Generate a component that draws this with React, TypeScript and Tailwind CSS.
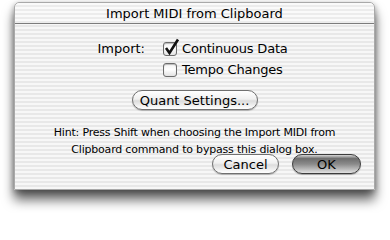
import React from "react";

const stripes =
  "bg-[repeating-linear-gradient(to_bottom,#f7f7f7_0px,#f7f7f7_2px,#e8e8e8_2px,#e8e8e8_4px)]";

const pill =
  "h-[20px] rounded-full border border-[#707070] bg-[linear-gradient(to_bottom,#ffffff,#f0f0f0_45%,#dcdcdc_55%,#f4f4f4_85%,#ffffff)] shadow-[0_1px_1px_rgba(0,0,0,0.25)] flex items-center justify-center leading-none";

function CheckBox({ checked }: { checked?: boolean }) {
  return (
    <div className="relative w-[14px] h-[14px] shrink-0">
      <div className="absolute inset-0 rounded-[3px] border border-[#6c6c6c] bg-[linear-gradient(to_bottom,#f4f4f4,#ffffff_45%,#e2e2e2)] shadow-[inset_0_1px_1px_rgba(0,0,0,0.25)]" />
      {checked && (
        <svg className="absolute left-0 -top-[4px] overflow-visible" width="17" height="18" viewBox="0 0 17 18">
          <path d="M3 10 L6.5 15 L15 1.5" fill="none" stroke="#111" strokeWidth="2.6" strokeLinecap="butt" strokeLinejoin="miter" />
        </svg>
      )}
    </div>
  );
}

function CheckRow({ label, checked }: { label: string; checked?: boolean }) {
  return (
    <div className="flex items-center h-[21px] gap-[5px]">
      <CheckBox checked={checked} />
      <span className="tracking-[-0.2px]">{label}</span>
    </div>
  );
}

export default function App() {
  return (
    <div
      className="w-[390px] h-[213px] bg-white overflow-hidden pt-[2px] pl-[14px] text-[13px] text-black"
      style={{ fontFamily: '"DejaVu Sans", "Liberation Sans", sans-serif' }}
    >
      <div className={`w-[361px] h-[188px] flex flex-col rounded-t-[5px] border border-[#a9a9a9] shadow-[0_10px_12px_rgba(0,0,0,0.6),0_2px_6px_rgba(0,0,0,0.35)] ${stripes}`}>
        {/* title bar */}
        <div className="h-[21px] shrink-0 flex items-center justify-center border-b border-[#7c7c7c] rounded-t-[5px] bg-[repeating-linear-gradient(to_bottom,#fafafa_0px,#fafafa_2px,#ececec_2px,#ececec_4px)]">
          <span className="leading-none">Import MIDI from Clipboard</span>
        </div>

        {/* import options */}
        <div className="flex mt-[14px]">
          <div className="w-[130px] text-right h-[21px] flex items-center justify-end">Import:</div>
          <div className="flex flex-col ml-[18px]">
            <CheckRow label="Continuous Data" checked />
            <CheckRow label="Tempo Changes" />
          </div>
        </div>

        <div className="flex justify-center mt-[10px]">
          <button className={`w-[126px] ${pill}`}>Quant Settings...</button>
        </div>

        <p className="mt-[14px] text-center text-[11px] leading-[17px] tracking-[-0.2px]">
          Hint: Press Shift when choosing the Import MIDI from
          <br />
          Clipboard command to bypass this dialog box.
        </p>

        <div className="flex justify-end gap-[13px] pr-[13px] mt-[-4px]">
          <button className={`w-[67px] ${pill}`}>Cancel</button>
          <button className="w-[69px] h-[20px] rounded-full border border-[#3c3c3c] bg-[linear-gradient(to_bottom,#d8d8d8,#6e6e6e_20%,#8a8a8a_50%,#bdbdbd_80%,#e2e2e2)] shadow-[0_1px_1px_rgba(0,0,0,0.3)] flex items-center justify-center leading-none">
            OK
          </button>
        </div>
      </div>
    </div>
  );
}
